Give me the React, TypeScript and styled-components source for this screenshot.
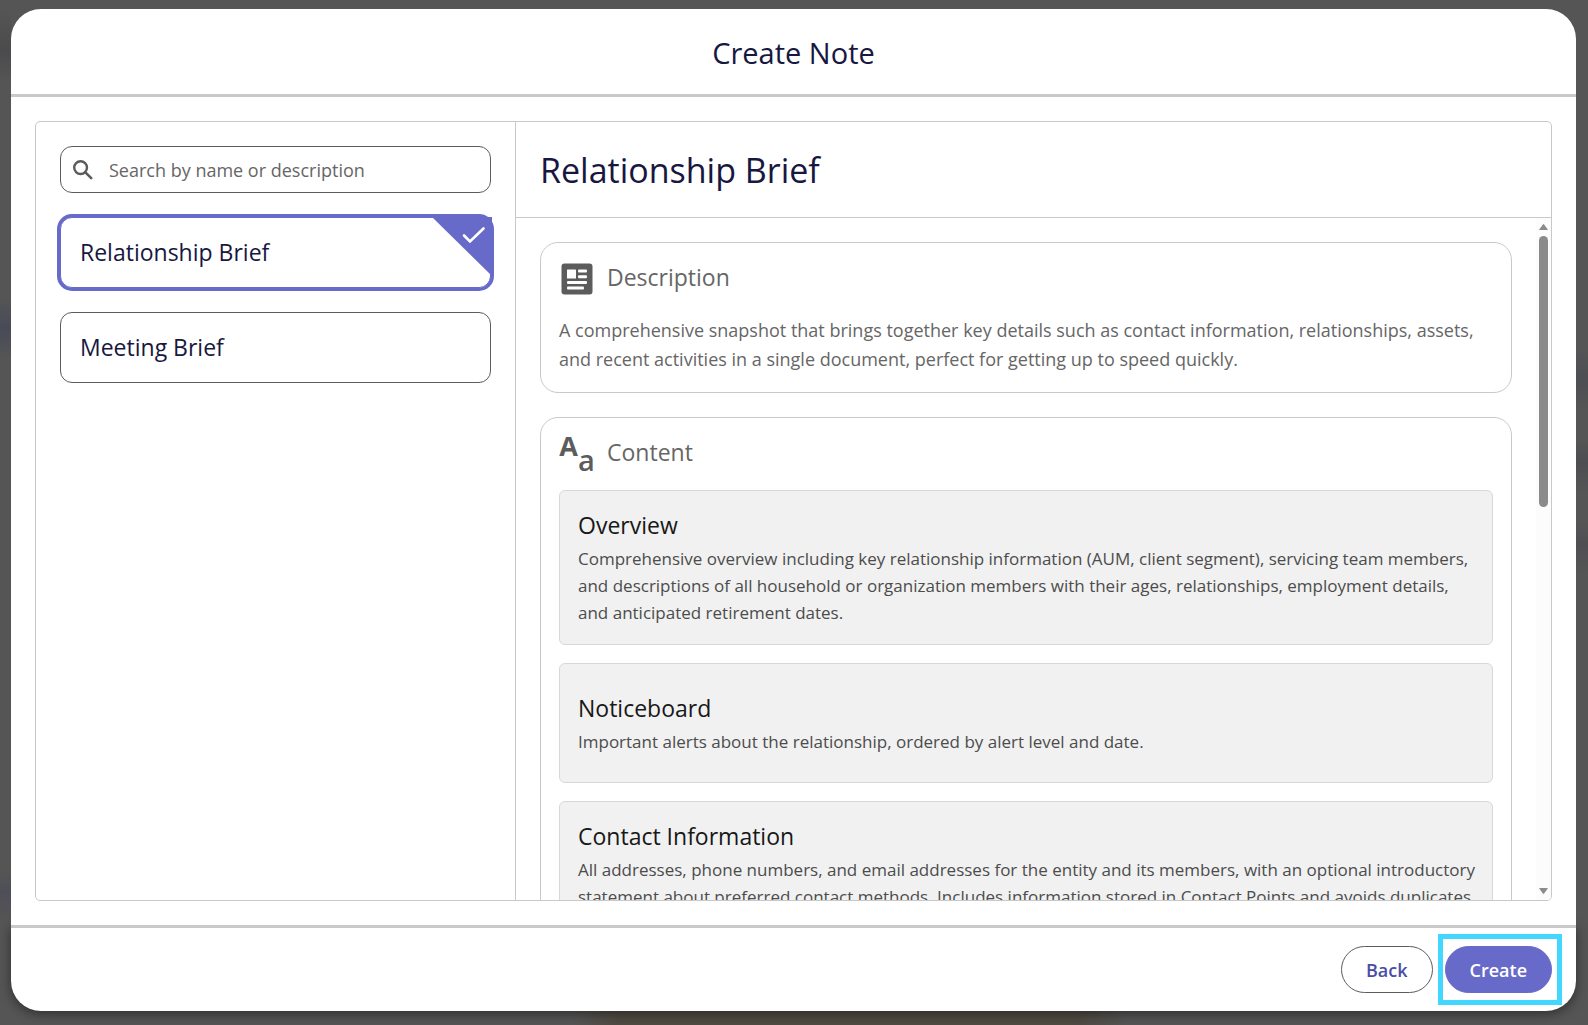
import React, { useState } from "react";
import styled, { createGlobalStyle } from "styled-components";

const color = {
  accent: "#676ac8",
  accentText: "#4a4da6",
  navy: "#17173f",
  border: "#c9c9c9",
  control: "#5c5c5c",
  muted: "#666666",
};

const GlobalStyle = createGlobalStyle`
  * { box-sizing: border-box; }
  body { margin: 0; font-family: "Open Sans", "Noto Sans", sans-serif; }
  h1, h2, h3, h4, p { margin: 0; font-weight: 400; }
  button, input { font: inherit; }
`;

const Backdrop = styled.div`
  display: flex;
  height: 100vh;
  padding: 9px 12px 14px 11px;
  background-color: #555555;
  background-image:
    linear-gradient(90deg, transparent 36%, #4f4a42 39%, #4f4a42 68%, transparent 71%),
    linear-gradient(180deg, transparent 1%, #4b4b4d 5%, transparent 8%, transparent 29%, #484b57 32%, transparent 35%, transparent 85%, #4e4e58 87%, transparent 90%),
    linear-gradient(180deg, transparent 34%, #4d4e53 37%, transparent 40%, transparent 43%, #4c4d52 45%, transparent 48%, transparent 51%, #4f4f53 53%, transparent 56%);
  background-repeat: no-repeat;
  background-position: left bottom, left top, right top;
  background-size: 100% 14px, 11px 100%, 12px 100%;
`;

const Modal = styled.main`
  flex: 1;
  min-width: 0;
  display: flex;
  flex-direction: column;
  background: #ffffff;
  border-radius: 30px;
`;

const ModalHeader = styled.header`
  display: flex;
  justify-content: center;
  padding: 23px 24px 21px;
  border-bottom: 3px solid ${color.border};
`;

const ModalTitle = styled.h1`
  font-size: 29px;
  line-height: 41px;
  color: ${color.navy};
`;

const ModalBody = styled.div`
  position: relative;
  z-index: 1;
  flex: 1;
  min-height: 0;
  display: flex;
  padding: 24px;
  background: #ffffff;
`;

const Panel = styled.div`
  flex: 1;
  min-width: 0;
  display: grid;
  grid-template-columns: 480px minmax(0, 1fr);
  grid-template-rows: minmax(0, 1fr);
  border: 1px solid ${color.border};
  border-radius: 5px;
  overflow: hidden;
`;

const Sidebar = styled.nav`
  display: flex;
  flex-direction: column;
  gap: 24px;
  padding: 24px;
  border-right: 1px solid ${color.border};
`;

const SearchBox = styled.label`
  display: flex;
  align-items: center;
  gap: 16px;
  height: 47px;
  padding: 0 12px;
  border: 1px solid ${color.control};
  border-radius: 12px;
`;

const SearchInput = styled.input`
  flex: 1;
  min-width: 0;
  padding: 0;
  border: 0;
  outline: 0;
  background: none;
  font-size: 18px;
  line-height: 28px;
  color: ${color.navy};
  &::placeholder {
    color: ${color.muted};
    opacity: 1;
  }
`;

const Option = styled.button<{ $selected: boolean }>`
  position: relative;
  height: 71px;
  padding: 0 19px 2px;
  border: 1px solid ${(p) => (p.$selected ? color.accent : color.control)};
  border-radius: 12px;
  box-shadow: ${(p) => (p.$selected ? `0 0 0 3px ${color.accent}` : "none")};
  background: #ffffff;
  text-align: left;
  font-size: 23px;
  line-height: 32px;
  color: ${color.navy};
  cursor: pointer;
`;

const Corner = styled.svg`
  position: absolute;
  top: -1px;
  right: -2px;
`;

const Detail = styled.section`
  display: flex;
  flex-direction: column;
  min-width: 0;
`;

const DetailHeader = styled.header`
  padding: 24px 24px 22px;
  border-bottom: 1px solid ${color.border};
`;

const DetailTitle = styled.h2`
  font-size: 34px;
  line-height: 49px;
  color: ${color.navy};
`;

const DetailBody = styled.div`
  flex: 1;
  min-height: 0;
  display: flex;
`;

const ScrollArea = styled.div`
  flex: 1;
  min-width: 0;
  display: flex;
  flex-direction: column;
  gap: 24px;
  padding: 24px;
  overflow-y: auto;
  scrollbar-width: none;
`;

const Card = styled.section`
  flex: none;
  padding: 18px;
  border: 1px solid ${color.border};
  border-radius: 18px;
`;

const CardHeader = styled.header`
  display: flex;
  gap: 12px;
  height: 36px;
  margin-bottom: 18px;
`;

const IconSlot = styled.span`
  flex: none;
  display: flex;
  align-items: center;
  justify-content: center;
  width: 36px;
  height: 36px;
  color: ${color.control};
`;

const LetterUpper = styled.span`
  align-self: flex-start;
  font: 700 27px/20px "Open Sans", sans-serif;
`;

const LetterLower = styled.span`
  align-self: flex-end;
  font: 600 29px/24px "Open Sans", sans-serif;
`;

const CardTitle = styled.h3`
  font-size: 23px;
  line-height: 32px;
  color: ${color.muted};
`;

const CardText = styled.p`
  padding-top: 1px;
  font-size: 18px;
  line-height: 29px;
  color: ${color.muted};
`;

const BlockList = styled.div`
  display: flex;
  flex-direction: column;
  gap: 18px;
`;

const Block = styled.article`
  display: flex;
  flex-direction: column;
  justify-content: center;
  gap: 4px;
  min-height: 120px;
  padding: 18px 12px 18px 18px;
  border: 1px solid #d8d8d8;
  border-radius: 6px;
  background: #f1f1f1;
`;

const BlockTitle = styled.h4`
  font-size: 23px;
  line-height: 32px;
  color: #181818;
`;

const BlockText = styled.p`
  font-size: 17px;
  line-height: 27px;
  color: #4c4c4c;
`;

const ScrollRail = styled.div`
  flex: none;
  display: flex;
  flex-direction: column;
  align-items: center;
  gap: 6px;
  width: 15px;
  padding: 6px 0;
  background: #fcfcfc;
`;

const RailTrack = styled.div`
  flex: 1;
  width: 9px;
`;

const RailThumb = styled.div`
  height: 42%;
  border-radius: 5px;
  background: #8b8b8b;
`;

const ModalFooter = styled.footer`
  display: flex;
  justify-content: flex-end;
  gap: 12px;
  padding: 18px 24px;
  border-top: 3px solid ${color.border};
  border-radius: 0 0 30px 30px;
  box-shadow: 0 3px 12px rgba(0, 0, 0, 0.45);
`;

const Button = styled.button<{ $primary?: boolean }>`
  height: 47px;
  padding: 0 24px;
  border: 1px solid ${(p) => (p.$primary ? color.accent : color.control)};
  border-radius: 24px;
  background: ${(p) => (p.$primary ? color.accent : "#ffffff")};
  color: ${(p) => (p.$primary ? "#ffffff" : color.accentText)};
  font-size: 18px;
  font-weight: 600;
  cursor: pointer;
`;

const Highlight = styled.div`
  position: relative;
  &::after {
    content: "";
    position: absolute;
    inset: -12px -10px -12px -7px;
    border: 5px solid #42d7ff;
    pointer-events: none;
  }
`;

const SearchIcon = () => (
  <svg width="20" height="20" viewBox="0 0 20 20" fill="none" stroke={color.control} strokeLinecap="round" aria-hidden="true">
    <circle cx="7.6" cy="7.6" r="6.4" strokeWidth="2.4" />
    <path d="M12.4 12.4 18.2 18.2" strokeWidth="2.6" />
  </svg>
);

const DescriptionIcon = () => (
  <svg width="32" height="32" viewBox="0 0 32 32" aria-hidden="true">
    <rect x="0.5" y="0.5" width="31" height="31" rx="3" fill={color.control} />
    <g fill="#ffffff">
      <rect x="6" y="6.5" width="9" height="9" rx="0.6" />
      <rect x="17" y="6.5" width="9" height="3" rx="1" />
      <rect x="17" y="12.2" width="9" height="3" rx="1" />
      <rect x="6" y="18" width="20" height="3" rx="1" />
      <rect x="6" y="23.5" width="17" height="3" rx="1" />
    </g>
  </svg>
);

const SelectedCorner = () => (
  <Corner width="60" height="59" viewBox="0 0 60 59" aria-hidden="true">
    <path d="M0 0H60V59Z" fill={color.accent} />
    <path d="M32 18.5 38 24.5 51.5 11.5" fill="none" stroke="#ffffff" strokeWidth="2.6" strokeLinecap="round" />
  </Corner>
);

const RailArrow = ({ down = false }: { down?: boolean }) => (
  <svg width="9" height="6" viewBox="0 0 9 6" aria-hidden="true">
    <path d={down ? "M.8 0h7.4q.8 0 .4.7L5.1 5.6q-.6.7-1.2 0L.4.7Q0 0 .8 0Z" : "M.8 6h7.4q.8 0 .4-.7L5.1.4q-.6-.7-1.2 0L.4 5.3Q0 6 .8 6Z"} fill="#8b8b8b" />
  </svg>
);

const options = ["Relationship Brief", "Meeting Brief"];

const blocks = [
  {
    title: "Overview",
    text: "Comprehensive overview including key relationship information (AUM, client segment), servicing team members, and descriptions of all household or organization members with their ages, relationships, employment details, and anticipated retirement dates.",
  },
  {
    title: "Noticeboard",
    text: "Important alerts about the relationship, ordered by alert level and date.",
  },
  {
    title: "Contact Information",
    text: "All addresses, phone numbers, and email addresses for the entity and its members, with an optional introductory statement about preferred contact methods. Includes information stored in Contact Points and avoids duplicates",
  },
];

export default function App() {
  const [selected, setSelected] = useState(options[0]);

  return (
    <>
      <GlobalStyle />
      <Backdrop>
        <Modal>
          <ModalHeader>
            <ModalTitle>Create Note</ModalTitle>
          </ModalHeader>
          <ModalBody>
            <Panel>
              <Sidebar>
                <SearchBox>
                  <SearchIcon />
                  <SearchInput type="text" placeholder="Search by name or description" aria-label="Search by name or description" />
                </SearchBox>
                {options.map((name) => (
                  <Option key={name} type="button" $selected={name === selected} aria-pressed={name === selected} onClick={() => setSelected(name)}>
                    {name}
                    {name === selected && <SelectedCorner />}
                  </Option>
                ))}
              </Sidebar>
              <Detail>
                <DetailHeader>
                  <DetailTitle>{selected}</DetailTitle>
                </DetailHeader>
                <DetailBody>
                  <ScrollArea>
                    <Card>
                      <CardHeader>
                        <IconSlot>
                          <DescriptionIcon />
                        </IconSlot>
                        <CardTitle>Description</CardTitle>
                      </CardHeader>
                      <CardText>
                        A comprehensive snapshot that brings together key details such as contact information, relationships, assets, and recent activities in a single document, perfect for getting up to speed quickly.
                      </CardText>
                    </Card>
                    <Card>
                      <CardHeader>
                        <IconSlot aria-hidden="true">
                          <LetterUpper>A</LetterUpper>
                          <LetterLower>a</LetterLower>
                        </IconSlot>
                        <CardTitle>Content</CardTitle>
                      </CardHeader>
                      <BlockList>
                        {blocks.map((block) => (
                          <Block key={block.title}>
                            <BlockTitle>{block.title}</BlockTitle>
                            <BlockText>{block.text}</BlockText>
                          </Block>
                        ))}
                      </BlockList>
                    </Card>
                  </ScrollArea>
                  <ScrollRail aria-hidden="true">
                    <RailArrow />
                    <RailTrack>
                      <RailThumb />
                    </RailTrack>
                    <RailArrow down />
                  </ScrollRail>
                </DetailBody>
              </Detail>
            </Panel>
          </ModalBody>
          <ModalFooter>
            <Button type="button">Back</Button>
            <Highlight>
              <Button type="button" $primary>
                Create
              </Button>
            </Highlight>
          </ModalFooter>
        </Modal>
      </Backdrop>
    </>
  );
}
